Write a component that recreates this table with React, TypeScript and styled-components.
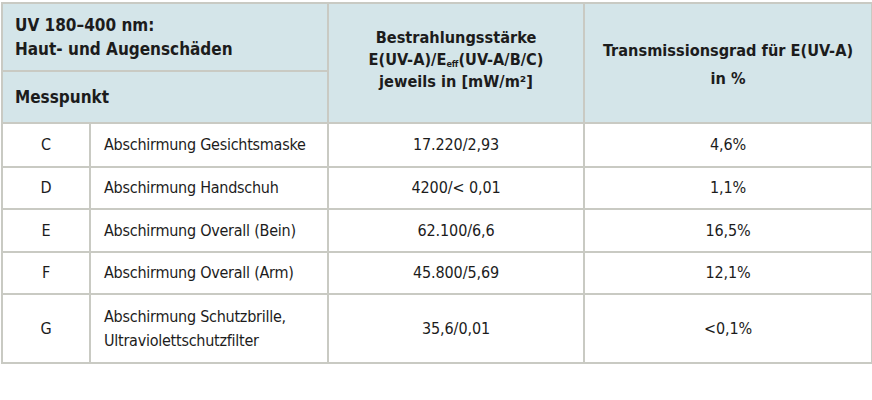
import styled, { createGlobalStyle } from 'styled-components'

const GlobalStyle = createGlobalStyle`
  html, body {
    margin: 0;
    padding: 0;
    background: #ffffff;
  }
  body {
    font-family: "DejaVu Sans", "Liberation Sans", sans-serif;
    font-stretch: condensed;
    color: #1c1c1c;
  }
`

const Wrap = styled.div`
  padding: 2px 1px 0 1px;
  width: 871px;
  box-sizing: border-box;
`

const Table = styled.table`
  width: 870px;
  border-collapse: collapse;
  table-layout: fixed;
  border: 2px solid #c9cac3;
`

const HeadCell = styled.th<{ align?: 'left' | 'center'; size?: number; lh?: number; shift?: number }>`
  background: #d4e5e9;
  border: 2px solid #c9cac3;
  font-weight: 700;
  font-size: ${p => p.size ?? 16.2}px;
  line-height: ${p => p.lh ?? 23}px;
  text-align: ${p => p.align ?? 'center'};
  padding: ${p => (p.shift && p.shift > 0 ? p.shift : 0)}px 12px
    ${p => (p.shift && p.shift < 0 ? -p.shift : 0)}px;
  vertical-align: middle;
`

const Cell = styled.td<{ align?: 'left' | 'center' }>`
  border: 2px solid #c9cac3;
  font-size: 16px;
  line-height: 24px;
  letter-spacing: ${p => (p.align === 'left' ? -0.25 : -0.1)}px;
  text-align: ${p => p.align ?? 'center'};
  padding: 0 13px;
  vertical-align: middle;
  white-space: nowrap;
`

const Row = styled.tr<{ h: number }>`
  height: ${p => p.h}px;
`

const Sub = styled.sub`
  font-size: 9px;
  vertical-align: -2px;
  line-height: 0;
`

const rows = [
  { id: 'C', name: 'Abschirmung Gesichtsmaske', e: '17.220/2,93', t: '4,6%', h: 44 },
  { id: 'D', name: 'Abschirmung Handschuh', e: '4200/< 0,01', t: '1,1%', h: 42 },
  { id: 'E', name: 'Abschirmung Overall (Bein)', e: '62.100/6,6', t: '16,5%', h: 43 },
  { id: 'F', name: 'Abschirmung Overall (Arm)', e: '45.800/5,69', t: '12,1%', h: 42 },
  { id: 'G', name: 'Abschirmung Schutzbrille,\nUltraviolettschutzfilter', e: '35,6/0,01', t: '<0,1%', h: 69 },
]

export default function App() {
  return (
    <>
      <GlobalStyle />
      <Wrap>
        <Table>
          <colgroup>
            <col style={{ width: 88 }} />
            <col style={{ width: 238 }} />
            <col style={{ width: 256 }} />
            <col style={{ width: 288 }} />
          </colgroup>
          <thead>
            <Row h={68}>
              <HeadCell colSpan={2} align="left" size={17} lh={24}>
                UV 180–400 nm:
                <br />
                Haut- und Augenschäden
              </HeadCell>
              <HeadCell rowSpan={2} lh={22} shift={-6}>
                Bestrahlungsstärke
                <br />
                E(UV-A)/E<Sub>eff</Sub>(UV-A/B/C)
                <br />
                jeweils in [mW/m²]
              </HeadCell>
              <HeadCell rowSpan={2} lh={28} shift={4}>
                Transmissionsgrad für E(UV-A)
                <br />
                in %
              </HeadCell>
            </Row>
            <Row h={52}>
              <HeadCell colSpan={2} align="left" size={17}>Messpunkt</HeadCell>
            </Row>
          </thead>
          <tbody>
            {rows.map(r => (
              <Row key={r.id} h={r.h}>
                <Cell>{r.id}</Cell>
                <Cell align="left">
                  {r.name.split('\n').map((l, i) => (
                    <div key={i}>{l}</div>
                  ))}
                </Cell>
                <Cell>{r.e}</Cell>
                <Cell>{r.t}</Cell>
              </Row>
            ))}
          </tbody>
        </Table>
      </Wrap>
    </>
  )
}
